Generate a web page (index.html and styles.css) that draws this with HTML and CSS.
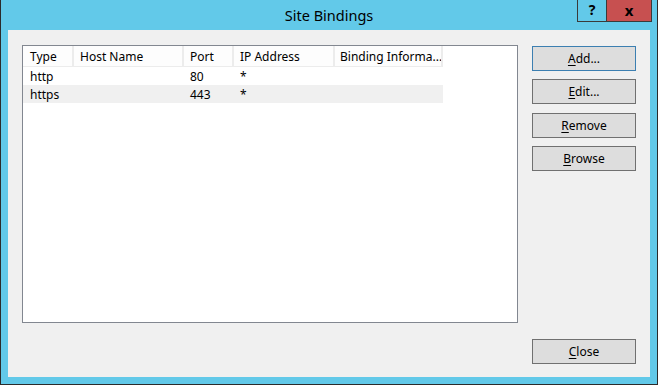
FILE: index.html
```html
<!DOCTYPE html>
<html lang="en">
<head>
  <meta charset="UTF-8">
  <title>Site Bindings</title>
  <link rel="stylesheet" href="styles.css">
</head>
<body>
  <div class="window">
    <div class="titlebar">
      <div></div>
      <div class="title">Site Bindings</div>
      <div class="caption-btns">
        <span class="cap help">?</span>
        <span class="cap close">x</span>
      </div>
    </div>
    <div class="client">
      <div class="listview">
        <div class="lv-head">
          <div class="cell c1">Type</div>
          <div class="cell c2">Host Name</div>
          <div class="cell c3">Port</div>
          <div class="cell c4">IP Address</div>
          <div class="cell c5">Binding Informa...</div>
        </div>
        <div class="lv-row">
          <div class="cell c1">http</div>
          <div class="cell c2"></div>
          <div class="cell c3">80</div>
          <div class="cell c4">*</div>
          <div class="cell c5"></div>
        </div>
        <div class="lv-row alt">
          <div class="cell c1">https</div>
          <div class="cell c2"></div>
          <div class="cell c3">443</div>
          <div class="cell c4">*</div>
          <div class="cell c5"></div>
        </div>
      </div>
      <div class="actions">
        <button class="btn default"><u>A</u>dd...</button>
        <button class="btn"><u>E</u>dit...</button>
        <button class="btn"><u>R</u>emove</button>
        <button class="btn"><u>B</u>rowse</button>
        <button class="btn bottom"><u>C</u>lose</button>
      </div>
    </div>
  </div>
</body>
</html>
```

FILE: styles.css
```css
body {
  margin: 0;
  padding: 0;
  background: #fff;
  font-family: 'Segoe UI', 'Noto Sans', 'Liberation Sans', sans-serif;
  font-size: 12px;
  color: #000;
}
.window {
  width: 656px;
  height: 384px;
  background: #62c9e9;
  border: 1px solid #2b2b2b;
  border-top: none;
  display: flex;
  flex-direction: column;
}
.titlebar {
  height: 30px;
  display: grid;
  grid-template-columns: 1fr auto 1fr;
  align-items: start;
}
.title {
  font-size: 14.5px;
  line-height: 31px;
  color: #000;
}
.caption-btns {
  justify-self: end;
  margin-right: 5px;
  display: flex;
}
.cap {
  height: 21px;
  line-height: 20px;
  text-align: center;
  font-weight: bold;
  font-size: 14px;
  border: 1px solid #3a3a3a;
  border-top: none;
}
.help {
  width: 28px;
  background: #62c9e9;
}
.close {
  width: 44px;
  background: #c75050;
  border-left: none;
  font-size: 15px;
}
.client {
  flex: 1;
  margin: 0 7px 7px 7px;
  background: #f0f0f0;
  display: flex;
  padding: 15px 14px 13px 14px;
}
.listview {
  width: 494px;
  height: 276px;
  background: #fff;
  border: 1px solid #828790;
}
.lv-head, .lv-row {
  display: flex;
}
.lv-head {
  height: 20px;
  border-bottom: 1px solid #ececec;
  width: 420px;
  background: #fdfdfd;
}
.lv-head .cell {
  line-height: 22px;
  border-right: 2px solid #ececec;
}
.lv-row {
  height: 18px;
  width: 420px;
}
.lv-row .cell {
  line-height: 20px;
}
.lv-row.alt {
  background: #f0f0f0;
}
.cell {
  box-sizing: border-box;
  padding-left: 7px;
  white-space: nowrap;
  overflow: hidden;
}
.c1 { width: 51px; }
.c2 { width: 110px; padding-left: 6px; }
.c3 { width: 50px; padding-left: 6px; }
.c4 { width: 101px; padding-left: 6px; }
.c5 { width: 108px; padding-left: 5px; }
.actions {
  margin-left: 14px;
  margin-top: 1px;
  width: 104px;
  display: flex;
  flex-direction: column;
  gap: 8.4px;
}
.btn {
  height: 25px;
  width: 104px;
  background: #dddddd;
  border: 1px solid #707070;
  font-family: inherit;
  font-size: 12px;
  color: #000;
  padding: 0;
}
.btn.default {
  border-color: #3c7fb1;
}
.btn.bottom {
  margin-top: auto;
}
u {
  text-decoration-thickness: 1px;
  text-underline-offset: 2px;
}
```
